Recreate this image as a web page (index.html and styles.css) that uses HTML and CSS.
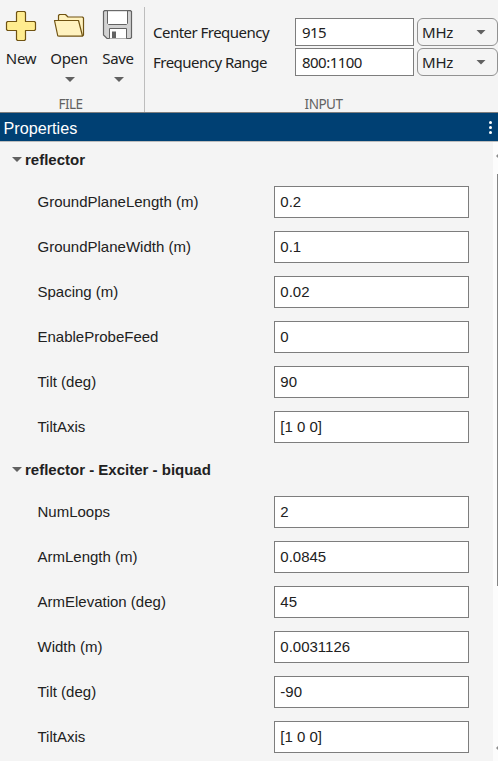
FILE: index.html
```
<!DOCTYPE html>
<html lang="en">
<head>
<meta charset="utf-8">
<title>Properties</title>
<link rel="stylesheet" href="styles.css">
</head>
<body>
<header class="toolstrip">
  <section class="file">
    <div class="tools">
      <div class="tool new">
        <svg width="32" height="32" viewBox="0 0 32 32"><path d="M12.500 1.500H19.500L20.500 2.500V11.500H29.500L30.500 12.500V19.500L29.500 20.500H20.500V29.500L19.500 30.500H12.500L11.500 29.500V20.500H2.500L1.500 19.500V12.500L2.500 11.500H11.500V2.500Z" fill="#ffec8f" stroke="#705312" stroke-width="1.200" stroke-linejoin="round"/></svg>
        <span>New</span>
      </div>
      <div class="tool open">
        <svg width="32" height="32" viewBox="0 0 32 32"><path d="M5.500 10V5.500L6.500 4.500H12.500L15 7H29.500L30.500 8V25L29.500 26H6Z" fill="#fff2bf" stroke="#705312" stroke-width="1.200" stroke-linejoin="round"/><path d="M1.500 10.500H25.500L29.500 26H4.800Z" fill="#fff2bf" stroke="#705312" stroke-width="1.200" stroke-linejoin="round"/></svg>
        <span>Open</span><i class="arrow"></i>
      </div>
      <div class="tool save">
        <svg width="32" height="32" viewBox="0 0 32 32"><path d="M2.500 .7H28.500L29.500 1.500V27.500L28.500 28.500H5L1.500 25V1.500Z" fill="#d2d2d2" stroke="#636363" stroke-width="1.200"/><path d="M5.500 .700H25.500V13.500L24.500 14.500H6.500L5.500 13.500Z" fill="#fff" stroke="#636363"/><path d="M7.500 28.500V18.500H24.500V28.500" fill="#fff" stroke="#636363"/><path d="M10 21.500H14V28H10Z" fill="#636363"/></svg>
        <span>Save</span><i class="arrow"></i>
      </div>
    </div>
    <div class="caption">FILE</div>
  </section>
  <section class="input">
    <div class="grid">
      <label class="name">Center Frequency</label><div class="box">915</div><div class="select">MHz<i class="arrow"></i></div>
      <label class="name">Frequency Range</label><div class="box">800:1100</div><div class="select">MHz<i class="arrow"></i></div>
    </div>
    <div class="caption">INPUT</div>
  </section>
</header>
<div class="titlebar"><span>Properties</span><div class="dots"><i></i><i></i><i></i></div></div>
<main class="panel">
  <div class="content">
    <section class="group">
      <h2><i class="arrow"></i>reflector</h2>
      <div class="row"><label>GroundPlaneLength (m)</label><div class="field">0.2</div></div>
      <div class="row"><label>GroundPlaneWidth (m)</label><div class="field">0.1</div></div>
      <div class="row"><label>Spacing (m)</label><div class="field">0.02</div></div>
      <div class="row"><label>EnableProbeFeed</label><div class="field">0</div></div>
      <div class="row"><label>Tilt (deg)</label><div class="field">90</div></div>
      <div class="row"><label>TiltAxis</label><div class="field">[1 0 0]</div></div>
    </section>
    <section class="group">
      <h2><i class="arrow"></i>reflector - Exciter - biquad</h2>
      <div class="row"><label>NumLoops</label><div class="field">2</div></div>
      <div class="row"><label>ArmLength (m)</label><div class="field">0.0845</div></div>
      <div class="row"><label>ArmElevation (deg)</label><div class="field">45</div></div>
      <div class="row"><label>Width (m)</label><div class="field">0.0031126</div></div>
      <div class="row"><label>Tilt (deg)</label><div class="field">-90</div></div>
      <div class="row"><label>TiltAxis</label><div class="field">[1 0 0]</div></div>
    </section>
  </div>
  <div class="scrollbar"><i class="tip"></i><i class="thumb"></i><i class="tip"></i></div>
</main>
</body>
</html>
```
FILE: styles.css
```
* { box-sizing: border-box; }
body {
  margin: 0;
  width: 498px;
  height: 761px;
  overflow: hidden;
  background: #f4f4f4;
  color: #212121;
  font: 15px/20px "Liberation Sans", Arial, sans-serif;
}
.arrow {
  flex: none;
  width: 10px;
  height: 5px;
  background: #616161;
  clip-path: polygon(0 0, 100% 0, 50% 100%);
}
.toolstrip {
  display: flex;
  height: 113px;
  border-bottom: 1px solid #7d7d7d;
  font-family: "Noto Sans", "Open Sans", sans-serif;
  font-size: 15px;
  letter-spacing: -0.52px;
}
.file {
  display: flex;
  flex-direction: column;
  width: 145px;
  position: relative;
}
.file::after {
  content: "";
  position: absolute;
  right: 0;
  top: 7px;
  bottom: 0;
  width: 1px;
  background: #bdbdbd;
}
.tools { display: flex; height: 94px; padding-top: 10px; }
.tool { display: flex; flex-direction: column; align-items: center; }
.tool svg { flex: none; }
.tool span { margin-top: 6px; letter-spacing: -0.35px; }
.tool .arrow { margin: 9px 0 0 2px; }
.new { width: 42px; }
.open { width: 54px; }
.save { width: 44px; }
.caption {
  height: 18px;
  line-height: 20px;
  font-size: 13.5px;
  text-align: center;
  color: #616161;
}
.file .caption { padding-right: 4px; }
.input { width: 353px; display: flex; flex-direction: column; }
.input .caption { padding-left: 4px; }
.grid {
  display: grid;
  grid-template-columns: 139px 119px 81px;
  grid-template-rows: 28px 28px;
  column-gap: 3px;
  row-gap: 2px;
  height: 94px;
  padding: 18px 0 0 8px;
}
.name { line-height: 29px; }
.box {
  padding-left: 6px;
  border: 1px solid #7d7d7d;
  background: #fff;
  line-height: 27px;
}
.select {
  display: flex;
  align-items: center;
  justify-content: space-between;
  padding: 0 11px 0 4px;
  border: 1px solid #929292;
  border-radius: 6px;
  letter-spacing: -0.2px;
}
.titlebar {
  display: flex;
  align-items: center;
  justify-content: space-between;
  height: 29px;
  padding: 1px 6px 0 3.5px;
  border-bottom: 1px solid #bdbdbd;
  background: #004073;
  color: #fff;
  font-size: 16.2px;
}
.titlebar span { padding-top: 1px; }
.dots { display: flex; flex-direction: column; gap: 2px; }
.dots i { width: 3px; height: 3px; border-radius: 50%; background: #fff; }
.panel { display: flex; height: 619px; }
.content { width: 493px; }
.group + .group { padding-top: 3px; }
h2 {
  display: flex;
  align-items: center;
  gap: 3px;
  height: 37px;
  margin: 0;
  padding: 0 0 2px 12px;
  font-size: 15px;
}
.row { display: flex; height: 45px; padding: 7px 0 6px 37px; }
.row label { width: 237px; padding-left: 0.5px; line-height: 31px; }
.field {
  width: 195px;
  padding-left: 5.3px;
  border: 1px solid #7d7d7d;
  background: #fff;
  line-height: 29px;
}
.scrollbar {
  display: flex;
  flex-direction: column;
  align-items: flex-end;
  width: 5px;
  background: #fcfcfc;
}
.tip {
  width: 2px;
  height: 4px;
  background: #8b8b8b;
  clip-path: polygon(0 50%, 100% 0, 100% 100%);
}
.tip:first-child { margin: 12px 0 16px; }
.tip:last-child { margin-top: 160px; }
.thumb { width: 1px; height: 412px; background: #858585; }
```
